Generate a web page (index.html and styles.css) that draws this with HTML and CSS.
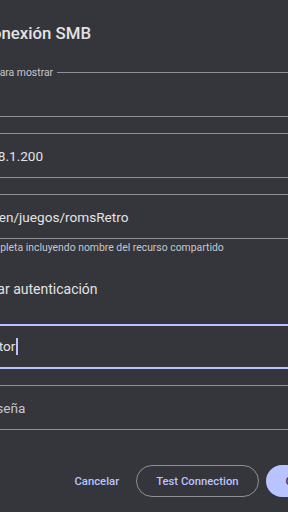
FILE: index.html
```html
<!DOCTYPE html>
<html lang="es">
<head>
  <meta charset="UTF-8">
  <title>Conexión SMB</title>
  <link rel="stylesheet" href="styles.css">
</head>
<body>
  <div class="dialog">
    <div class="dialog-header">
      <svg class="header-icon" viewBox="0 0 24 24"><path fill="#b8c4ff" d="M10 4H4c-1.1 0-2 .9-2 2v12c0 1.1.9 2 2 2h16c1.1 0 2-.9 2-2V8c0-1.1-.9-2-2-2h-8l-2-2z"/></svg>
      <h2 class="dialog-title">Conexión SMB</h2>
    </div>

    <form class="smb-form">
      <div class="field">
        <span class="field-label">Nombre para mostrar</span>
        <span class="field-value"></span>
      </div>

      <div class="field">
        <span class="field-label">Host</span>
        <span class="field-value">192.168.1.200</span>
      </div>

      <div class="field-group">
        <div class="field">
          <span class="field-label">Ruta</span>
          <span class="field-value">/almacen/juegos/romsRetro</span>
        </div>
        <div class="helper">Ruta completa incluyendo nombre del recurso compartido</div>
      </div>

      <label class="check-row">
        <span class="checkbox"></span>
        <span>Usar autenticación</span>
      </label>

      <div class="field focused">
        <span class="field-label">Usuario</span>
        <span class="field-value">Decorator<span class="caret"></span></span>
      </div>

      <div class="field">
        <span class="field-placeholder">Contraseña</span>
      </div>
    </form>

    <div class="actions">
      <button class="btn btn-text" type="button">Cancelar</button>
      <button class="btn btn-outlined" type="button">Test Connection</button>
      <button class="btn btn-filled" type="button">Guardar</button>
    </div>
  </div>
</body>
</html>
```

FILE: styles.css
```css
html, body {
  margin: 0;
  height: 100%;
  overflow: hidden;
  background: #35363b;
}
body {
  font-family: Roboto, "Noto Sans", Arial, sans-serif;
  color: #e3e2e6;
}
.dialog {
  width: 443px;
  margin-left: -77px;
  padding: 21px 20px 0;
  box-sizing: border-box;
}
.dialog-header {
  display: flex;
  align-items: center;
  height: 24px;
  margin-bottom: 27px;
}
.header-icon {
  width: 24px;
  height: 24px;
  margin-right: 14px;
  flex-shrink: 0;
}
.dialog-title {
  margin: 0;
  font-size: 16.8px;
  font-weight: 500;
  line-height: 24px;
}
.smb-form {
  display: flex;
  flex-direction: column;
  gap: 16px;
}
.field-group {
  display: flex;
  flex-direction: column;
}
.field {
  position: relative;
  height: 45px;
  box-sizing: border-box;
  border: 1px solid #8e9099;
  border-radius: 4px;
  padding: 0 12px;
  display: flex;
  align-items: center;
  font-size: 13.6px;
}
.field.focused {
  border: 2px solid #b8c4ff;
  padding: 0 11px;
}
.field-label {
  position: absolute;
  top: -7px;
  left: 6px;
  padding: 0 4px;
  background: #35363b;
  font-size: 10.4px;
  line-height: 14px;
  color: #c5c6d0;
}
.focused .field-label {
  top: -8px;
  left: 5px;
  color: #b8c4ff;
}
.field-placeholder {
  color: #c5c6d0;
}
.caret {
  display: inline-block;
  width: 1.5px;
  height: 17px;
  margin-left: 1px;
  background: #b8c4ff;
  vertical-align: middle;
}
.helper {
  padding: 2px 0 0 13px;
  font-size: 10.4px;
  line-height: 14px;
  color: #c5c6d0;
}
.check-row {
  display: flex;
  align-items: center;
  height: 35px;
  margin-bottom: 2px;
  font-size: 14px;
}
.checkbox {
  width: 18px;
  height: 18px;
  margin-right: 20px;
  border: 2px solid #c5c6d0;
  border-radius: 2px;
  box-sizing: border-box;
}
.actions {
  display: flex;
  justify-content: flex-end;
  align-items: center;
  gap: 7px;
  margin-top: 35px;
}
.btn {
  height: 32px;
  padding: 0 20px;
  border: none;
  border-radius: 16px;
  background: none;
  font-family: inherit;
  font-size: 11.3px;
  font-weight: 500;
  color: #b8c4ff;
}
.btn-text {
  padding: 0 10px;
}
.btn-outlined {
  border: 1px solid #8e9099;
  padding: 0 19px;
}
.btn-filled {
  background: #b8c4ff;
  color: #1f2c5f;
}
```
